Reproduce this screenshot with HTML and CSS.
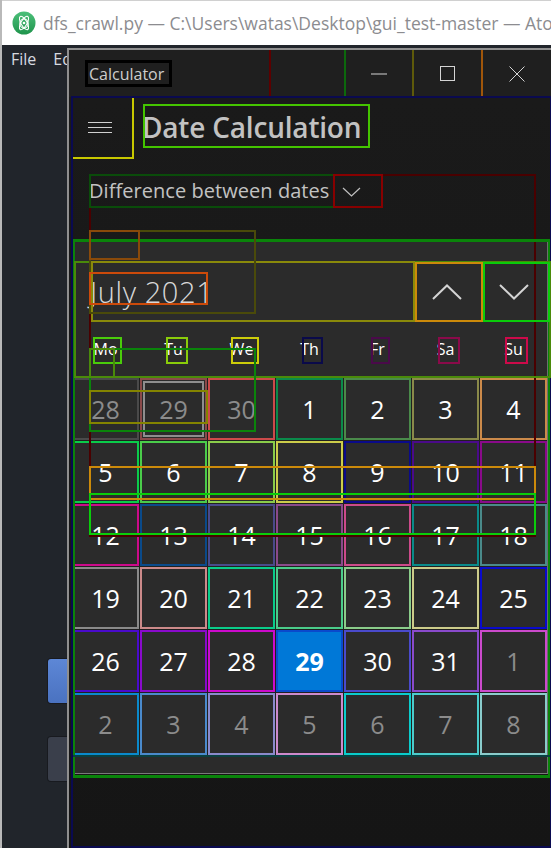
FILE: index.html
```html
<!DOCTYPE html>
<html>
<head>
<meta charset="utf-8">
<link rel="stylesheet" href="styles.css">
</head>
<body>
<div class="screen">
  <header class="atom-title">
    <svg class="atom-logo" width="24" height="24" viewBox="0 0 24 24">
      <defs><linearGradient id="g" x1="0" y1="0" x2="0" y2="1"><stop offset="0" stop-color="#4cc07a"/><stop offset="1" stop-color="#1f944c"/></linearGradient></defs>
      <circle cx="12" cy="12" r="11.5" fill="url(#g)"/>
      <g fill="none" stroke="#fff" stroke-width="1.1">
        <ellipse cx="12" cy="12" rx="7.5" ry="3" transform="rotate(60 12 12)"/>
        <ellipse cx="12" cy="12" rx="7.5" ry="3" transform="rotate(-60 12 12)"/>
        <ellipse cx="12" cy="12.5" rx="4.2" ry="4.6"/>
      </g>
      <circle cx="12" cy="12" r="1.3" fill="#fff"/>
    </svg>
    <span class="atom-title-text">dfs_crawl.py — C:\Users\watas\Desktop\gui_test-master — Atom</span>
  </header>
  <div class="atom-body">
    <nav class="atom-menu"><span>File</span><span>Edit</span></nav>
    <div class="side-buttons">
      <div class="side-btn primary"></div>
      <div class="side-btn"></div>
    </div>
  </div>

  <section class="calc-window">
    <div class="calc-titlebar">
      <span class="calc-title">Calculator</span>
      <div class="caption-buttons">
        <div class="cap-btn"><svg width="16" height="2" viewBox="0 0 16 2"><line x1="0" y1="1" x2="16" y2="1" stroke="#d4d4d4" stroke-width="1"/></svg></div>
        <div class="cap-btn"><svg width="15" height="15" viewBox="0 0 15 15"><rect x="0.5" y="0.5" width="14" height="14" fill="none" stroke="#d4d4d4" stroke-width="1"/></svg></div>
        <div class="cap-btn"><svg width="16" height="16" viewBox="0 0 16 16"><path d="M0.5 0.5 L15.5 15.5 M15.5 0.5 L0.5 15.5" stroke="#d4d4d4" stroke-width="1"/></svg></div>
      </div>
    </div>
    <main class="calc-content">
      <div class="calc-header">
        <div class="hamburger"><svg width="24" height="11" viewBox="0 0 24 11"><path d="M0 0.5 H24 M0 5.5 H24 M0 10.5 H24" stroke="#d0d0d0" stroke-width="1"/></svg></div>
        <h1 class="calc-heading">Date Calculation</h1>
      </div>
      <div class="mode-row">
        <span class="mode-text">Difference between dates</span>
        <svg class="mode-chev" width="19" height="10" viewBox="0 0 19 10"><polyline points="1,1 9.5,9 18,1" fill="none" stroke="#c0c0c0" stroke-width="1.2"/></svg>
      </div>
      <div class="calendar">
        <div class="cal-header">
          <span class="cal-month">July 2021</span>
          <div class="cal-nav"><svg width="30" height="16" viewBox="0 0 30 16"><polyline points="1,15 15,1.5 29,15" fill="none" stroke="#d4d4d4" stroke-width="2"/></svg></div>
          <div class="cal-nav"><svg width="30" height="16" viewBox="0 0 30 16"><polyline points="1,1 15,14.5 29,1" fill="none" stroke="#d4d4d4" stroke-width="2"/></svg></div>
        </div>
        <div class="weekdays">
          <span>Mo</span><span>Tu</span><span>We</span><span>Th</span><span>Fr</span><span>Sa</span><span>Su</span>
        </div>
        <div class="days">
          <div class="day out" style="--c:#4a4a4a">28</div>
          <div class="day out hover" style="--c:#8a4a4a">29</div>
          <div class="day out" style="--c:#cc4a4a">30</div>
          <div class="day" style="--c:#0a8a4a">1</div>
          <div class="day" style="--c:#4a8a4a">2</div>
          <div class="day" style="--c:#8a8a4a">3</div>
          <div class="day" style="--c:#cc8a4a">4</div>

          <div class="day" style="--c:#0acc4a">5</div>
          <div class="day" style="--c:#4acc4a">6</div>
          <div class="day" style="--c:#8acc4a">7</div>
          <div class="day" style="--c:#cccc4a">8</div>
          <div class="day" style="--c:#0a0a8a">9</div>
          <div class="day" style="--c:#4a0a8a">10</div>
          <div class="day" style="--c:#8a0a8a">11</div>

          <div class="day" style="--c:#cc0a8a">12</div>
          <div class="day" style="--c:#0a4a8a">13</div>
          <div class="day" style="--c:#4a4a8a">14</div>
          <div class="day" style="--c:#8a4a8a">15</div>
          <div class="day" style="--c:#cc4a8a">16</div>
          <div class="day" style="--c:#0a8a8a">17</div>
          <div class="day" style="--c:#4a8a8a">18</div>

          <div class="day" style="--c:#8a8a8a">19</div>
          <div class="day" style="--c:#cc8a8a">20</div>
          <div class="day" style="--c:#0acc8a">21</div>
          <div class="day" style="--c:#4acc8a">22</div>
          <div class="day" style="--c:#8acc8a">23</div>
          <div class="day" style="--c:#cccc8a">24</div>
          <div class="day" style="--c:#0a0acc">25</div>

          <div class="day" style="--c:#4a0acc">26</div>
          <div class="day" style="--c:#8a0acc">27</div>
          <div class="day" style="--c:#cc0acc">28</div>
          <div class="day selected" style="--c:#0a4acc">29</div>
          <div class="day" style="--c:#4a4acc">30</div>
          <div class="day" style="--c:#8a4acc">31</div>
          <div class="day out" style="--c:#cc4acc">1</div>

          <div class="day out" style="--c:#0a8acc">2</div>
          <div class="day out" style="--c:#4a8acc">3</div>
          <div class="day out" style="--c:#8a8acc">4</div>
          <div class="day out" style="--c:#cc8acc">5</div>
          <div class="day out" style="--c:#0acccc">6</div>
          <div class="day out" style="--c:#4acccc">7</div>
          <div class="day out" style="--c:#8acccc">8</div>
        </div>
      </div>
    </main>
  </section>

  <div class="annotations">
    <div class="ann a-calc-title"></div>
    <div class="ann vl vl1"></div>
    <div class="ann vl vl2"></div>
    <div class="ann vl vl3"></div>
    <div class="ann vl vl4"></div>
    <div class="ann a-yellow"></div>
    <div class="ann a-dkred"></div>
    <div class="ann a-popup"></div>
    <div class="ann a-navy"></div>
    <div class="ann a-title"></div>
    <div class="ann a-mode"></div>
    <div class="ann a-red"></div>
    <div class="ann a-midgreen"></div>
    <div class="ann a-olive"></div>
    <div class="ann a-dkolive"></div>
    <div class="ann a-brown"></div>
    <div class="ann a-month"></div>
    <div class="ann a-up"></div>
    <div class="ann a-down"></div>
    <div class="ann wd wd1"></div>
    <div class="ann wd wd2"></div>
    <div class="ann wd wd3"></div>
    <div class="ann wd wd4"></div>
    <div class="ann wd wd5"></div>
    <div class="ann wd wd6"></div>
    <div class="ann wd wd7"></div>
    <div class="ann a-green2"></div>
    <div class="ann a-olgreen"></div>
    <div class="ann a-olive2"></div>
    <div class="ann a-orange2"></div>
    <div class="ann a-green3"></div>
    <div class="ann a-teal"></div>
  </div>
</div>
</body>
</html>
```
FILE: styles.css
```css
* { box-sizing: border-box; }
html, body { margin: 0; padding: 0; }
body {
  width: 551px;
  height: 848px;
  overflow: hidden;
  background: #21252b;
  font-family: "Open Sans", "Noto Sans", sans-serif;
}
.screen {
  position: relative;
  width: 551px;
  height: 848px;
  border-left: 2px solid #b9b9b9;
  display: flex;
  flex-direction: column;
  overflow: hidden;
}

/* Atom window */
.atom-title {
  height: 45px;
  flex: none;
  background: #ffffff;
  border-top: 1px solid #d0d0d0;
  display: flex;
  align-items: center;
  padding-left: 10px;
  gap: 7px;
  white-space: nowrap;
  overflow: hidden;
}
.atom-logo { flex: none; }
.atom-title-text {
  font-size: 17.5px;
  color: #8c8c90;
  font-family: "Open Sans", sans-serif;
}
.atom-body {
  flex: 1;
  background: #21252b;
  display: flex;
  flex-direction: column;
}
.atom-menu {
  height: 28px;
  line-height: 28px;
  display: flex;
  gap: 17px;
  padding-left: 9px;
  font-size: 16px;
  color: #d7dae0;
}
.side-buttons {
  margin-top: 586px;
  padding-left: 46px;
  display: flex;
  flex-direction: column;
  gap: 34px;
}
.side-btn {
  width: 40px;
  height: 44px;
  border-radius: 3px;
  background: #3a3f4b;
  box-shadow: 0 0 0 1px #181a1f;
}
.side-btn.primary {
  background: linear-gradient(#5d87d6, #4a72c0);
}

/* Calculator window */
.calc-window {
  position: absolute;
  left: 65px;
  top: 48px;
  width: 486px;
  height: 800px;
  border-top: 2px solid #8f8f8f;
  border-left: 2px solid #8f8f8f;
  background: #191919;
  display: flex;
  flex-direction: column;
}
.calc-titlebar {
  height: 47px;
  flex: none;
  background: #1f1f1f;
  display: flex;
  align-items: center;
  padding-left: 20px;
  padding-right: 2px;
}
.calc-title {
  font-size: 16px;
  color: #cdcdcd;
  flex: 1;
}
.caption-buttons {
  display: flex;
  height: 100%;
}
.cap-btn {
  width: 69px;
  display: flex;
  align-items: center;
  justify-content: center;
}
.calc-content {
  flex: 1;
  padding-left: 2px;
  display: flex;
  flex-direction: column;
  background: linear-gradient(#1a1a1a, #151515);
}
.calc-header {
  height: 61px;
  display: flex;
  align-items: center;
}
.hamburger {
  width: 60px;
  height: 61px;
  display: flex;
  align-items: center;
  justify-content: center;
  padding-right: 2px;
}
.calc-heading {
  margin: 0 0 2px 11px;
  font-size: 28px;
  font-weight: 600;
  color: #c2c2c2;
  line-height: 40px;
  letter-spacing: -0.2px;
}
.mode-row {
  margin-top: 17px;
  height: 32px;
  padding-left: 18px;
  display: flex;
  align-items: center;
  gap: 13px;
}
.mode-text {
  font-size: 20px;
  line-height: 32px;
  color: #c2c2c2;
  letter-spacing: 0.05px;
}
.mode-chev { margin-top: 1px; }

.calendar {
  margin-top: 34px;
  width: 477px;
  height: 533px;
  background: #2b2b2b;
  border-right: 1px solid #6e6e6e;
  border-bottom: 1px solid #7a7a7a;
  padding: 21px 0 0 1px;
  display: flex;
  flex-direction: column;
}
.cal-header {
  height: 59px;
  display: flex;
  align-items: center;
}
.cal-month {
  flex: 1;
  padding-left: 18px;
  font-size: 29px;
  font-weight: 300;
  color: #d8d8d8;
  line-height: 59px;
  letter-spacing: 0.6px;
}
.cal-nav {
  width: 67px;
  height: 59px;
  display: flex;
  align-items: center;
  justify-content: center;
}
.weekdays {
  height: 57px;
  display: grid;
  grid-template-columns: repeat(7, 67px);
  column-gap: 1px;
  align-items: center;
  justify-items: center;
  font-size: 16px;
  color: #ffffff;
  padding-bottom: 1px;
}
.days {
  display: grid;
  grid-template-columns: repeat(7, 67px);
  grid-template-rows: repeat(6, 62px);
  gap: 1px;
  background: #202020;
  width: 475px;
}
.day {
  background: #2b2b2b;
  border: 2px solid var(--c);
  display: flex;
  align-items: center;
  justify-content: center;
  font-size: 25px;
  color: #ffffff;
}
.day.out { color: #8c8c8c; }
.day.hover { box-shadow: inset 0 0 0 1px #2b2b2b, inset 0 0 0 3px #8e8e8e; }
.day.selected {
  background: #0078d7;
  font-weight: 700;
}

/* annotation overlays */
.annotations {
  position: absolute;
  inset: 0;
  pointer-events: none;
}
.ann {
  position: absolute;
  border: 2px solid;
}
.a-calc-title { left: 83px; top: 60px; width: 87px; height: 27px; border: 3px solid #000; }
.vl { top: 50px; height: 46px; width: 2px; border: 0; }
.vl1 { left: 267px; background: #5c0000; }
.vl2 { left: 342px; background: #0c680c; }
.vl3 { left: 410px; background: #5e5a0a; }
.vl4 { left: 479px; background: #a0560a; }
.a-navy { left: 69px; top: 96px; width: 481px; height: 752px; border-color: #0a0a50; }
.a-dkred { left: 87px; top: 174px; width: 447px; height: 363px; border-color: #4a0000; }
.a-popup { left: 70px; top: 239px; width: 479px; height: 539px; border: 3px solid #0a840a; }
.a-yellow { left: 69px; top: 96px; width: 63px; height: 63px; border-color: #c8c800; }
.a-title { left: 141px; top: 104px; width: 227px; height: 44px; border-color: #44c400; }
.a-mode { left: 87px; top: 174px; width: 246px; height: 34px; border-color: #0a4c0a; }
.a-red { left: 331px; top: 174px; width: 50px; height: 34px; border-color: #880000; }
.a-midgreen { left: 72px; top: 261px; width: 477px; height: 117px; border-color: #4a8a0a; }
.a-olive { left: 89px; top: 261px; width: 324px; height: 61px; border-color: #8a8a0a; }
.a-dkolive { left: 87px; top: 230px; width: 167px; height: 84px; border-color: #4a4a0a; }
.a-brown { left: 87px; top: 230px; width: 51px; height: 30px; border-color: #8a4a0a; }
.a-month { left: 87px; top: 272px; width: 119px; height: 33px; border-color: #cc4a0a; }
.a-up { left: 413px; top: 262px; width: 68px; height: 60px; border-color: #cc8a0a; }
.a-down { left: 481px; top: 262px; width: 67px; height: 60px; border-color: #0acc0a; }
.wd { top: 337px; height: 27px; }
.wd1 { left: 91px; width: 29px; border-color: #4acc0a; }
.wd2 { left: 164px; width: 22px; border-color: #8acc0a; }
.wd3 { left: 229px; width: 28px; border-color: #cccc0a; }
.wd4 { left: 300px; width: 21px; border-color: #0a0a4a; }
.wd5 { left: 369px; width: 19px; border-color: #4a0a4a; }
.wd6 { left: 436px; width: 22px; border-color: #8a0a4a; }
.wd7 { left: 503px; width: 23px; border-color: #cc0a4a; }
.a-green2 { left: 87px; top: 348px; width: 167px; height: 84px; border-color: #0a840a; }
.a-olgreen { left: 87px; top: 348px; width: 26px; height: 30px; border-color: #4a8a0a; }
.a-olive2 { left: 87px; top: 390px; width: 119px; height: 34px; border-color: #848400; }
.a-orange2 { left: 87px; top: 466px; width: 447px; height: 34px; border-color: #cc8a0a; }
.a-green3 { left: 87px; top: 493px; width: 447px; height: 42px; border-color: #0acc0a; }
.a-teal { left: 71px; top: 755px; width: 477px; height: 2px; border: 0; background: #0a4040; }
```
